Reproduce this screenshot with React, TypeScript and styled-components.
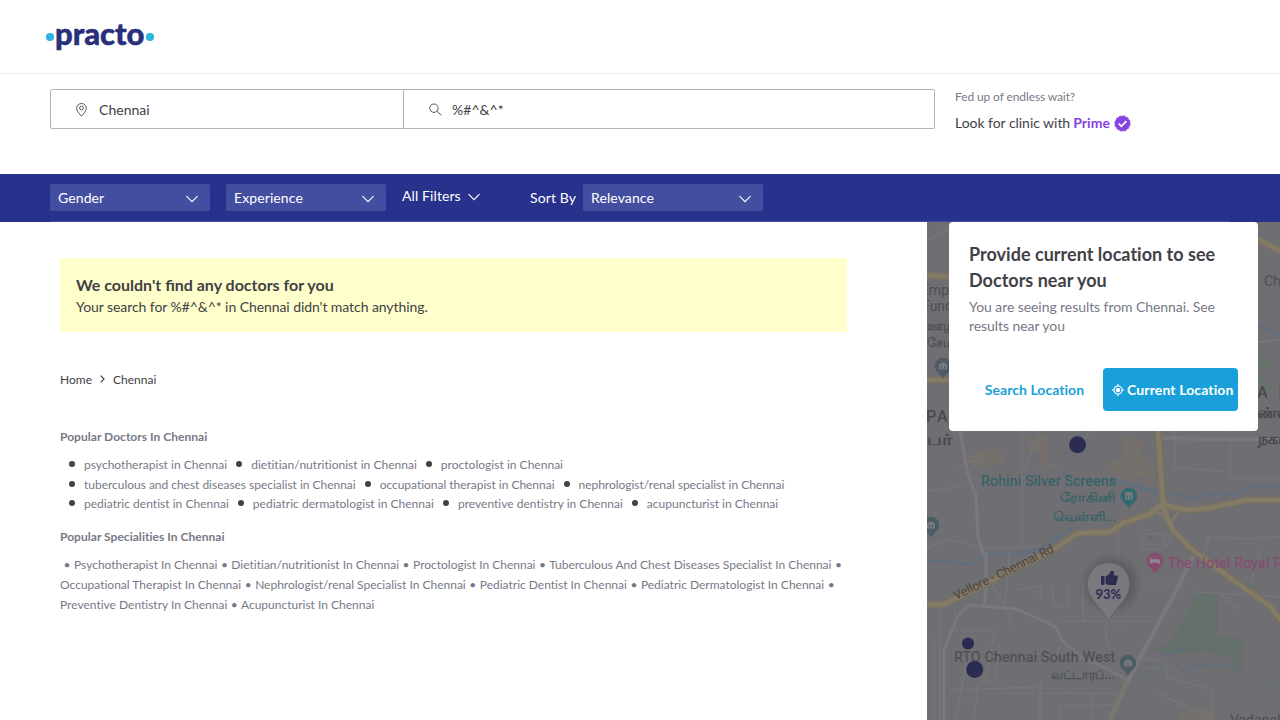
import React, { Fragment } from 'react';
import styled, { createGlobalStyle } from 'styled-components';

const GlobalStyle = createGlobalStyle`
  *, *::before, *::after { box-sizing: border-box; }
  html, body { margin: 0; padding: 0; }
  body {
    font-family: Lato, "Liberation Sans", sans-serif;
    font-size: 14px;
    font-variant-ligatures: none;
    color: #414146;
    background: #fff;
  }
  h1, h2, p, ul { margin: 0; padding: 0; }
`;

const Page = styled.div`
  display: flex;
  flex-direction: column;
  width: 1280px;
  height: 720px;
  overflow: hidden;
`;

const Header = styled.header`
  height: 74px;
  padding: 18px 0 0 44px;
  border-bottom: 1px solid #ededf1;
`;

const SearchRow = styled.section`
  display: flex;
  height: 100px;
  padding: 15px 0 0 50px;
`;

const SearchBox = styled.div`
  display: flex;
  width: 885px;
  height: 40px;
  border: 1px solid #b4b4be;
  border-radius: 2px;
`;

const SearchField = styled.div<{ $width?: number }>`
  display: flex;
  align-items: center;
  gap: 10px;
  padding-left: 24px;
  letter-spacing: 0.03px;
  flex: ${(p) => (p.$width ? `0 0 ${p.$width}px` : '1')};
  & + & { border-left: 1px solid #b4b4be; }
  svg { margin-top: 1px; }
`;

const PrimePromo = styled.div`
  padding-left: 20px;
`;

const PromoHint = styled.p`
  font-size: 12px;
  line-height: 16px;
  letter-spacing: -0.11px;
  color: #787887;
`;

const PromoLink = styled.p`
  display: flex;
  align-items: center;
  gap: 3px;
  margin-top: 9px;
  line-height: 18px;
  letter-spacing: -0.04px;
  b { color: #8642e3; font-weight: 700; letter-spacing: 0.06px; }
  svg { margin-left: 1px; }
`;

const FilterBar = styled.nav`
  height: 48px;
  padding: 0 50px;
  background: #28328c;
`;

const FilterInner = styled.div`
  display: flex;
  height: 48px;
  padding-top: 10px;
  border-bottom: 1px solid #414ba0;
  color: #fff;
  letter-spacing: 0.1px;
`;

const Dropdown = styled.div<{ $width: number }>`
  display: flex;
  align-items: center;
  justify-content: space-between;
  width: ${(p) => p.$width}px;
  height: 27px;
  padding: 0 12px 0 8px;
  margin-right: 16px;
  border-radius: 2px;
  background: #444ea1;
  svg { margin-top: 2px; }
`;

const AllFilters = styled.div`
  display: flex;
  align-items: center;
  gap: 7px;
  height: 23px;
  width: 128px;
  svg { margin-top: 2px; }
`;

const SortLabel = styled.span`
  width: 53px;
  line-height: 27px;
`;

const Body = styled.div`
  display: flex;
  flex: 1;
  min-height: 0;
`;

const Results = styled.main`
  width: 927px;
  padding: 36px 80px 0 60px;
`;

const EmptyNotice = styled.section`
  height: 74px;
  padding: 16px 16px 0;
  background: #ffffcc;
`;

const NoticeTitle = styled.h1`
  font-size: 16px;
  line-height: 22px;
  font-weight: 700;
  font-variant-ligatures: normal;
`;

const NoticeText = styled.p`
  line-height: 22px;
  letter-spacing: -0.07px;
`;

const Breadcrumb = styled.div`
  display: flex;
  align-items: center;
  gap: 8px;
  margin-top: 39px;
  height: 16px;
  font-size: 12px;
`;

const SectionTitle = styled.h2<{ $top: number }>`
  margin-top: ${(p) => p.$top}px;
  font-size: 12px;
  line-height: 16px;
  font-weight: 700;
  letter-spacing: 0.03px;
  color: #787887;
`;

const DoctorList = styled.ul`
  display: flex;
  flex-wrap: wrap;
  margin-top: 10px;
  list-style: none;
  font-size: 12px;
  line-height: 19.6px;
  color: #787887;
`;

const DoctorItem = styled.li<{ $tight: boolean }>`
  display: flex;
  align-items: center;
  letter-spacing: ${(p) => (p.$tight ? -0.025 : 0.02)}px;
  &::before {
    content: '';
    width: 6px;
    height: 6px;
    margin: -1px 9px 0;
    border-radius: 50%;
    background: #414146;
  }
`;

const Specialities = styled.p`
  margin-top: 10px;
  font-size: 12px;
  line-height: 20px;
  color: #787887;
`;

const Bullet = styled.span`
  padding: 0 0.45px;
`;

const MapPanel = styled.aside`
  position: relative;
  width: 353px;
  background: #6f6e73;
  & > svg { display: block; }
`;

const LocationCard = styled.div`
  position: absolute;
  top: 0;
  left: 22px;
  width: 309px;
  height: 209px;
  padding: 19px 20px 0;
  border-radius: 4px;
  background: #fff;
`;

const CardTitle = styled.h2`
  font-size: 18px;
  line-height: 26px;
  font-weight: 700;
  letter-spacing: 0.02px;
`;

const CardText = styled.p`
  margin-top: 4px;
  line-height: 19px;
  letter-spacing: -0.07px;
  color: #787887;
`;

const CardActions = styled.div`
  display: flex;
  justify-content: flex-end;
  margin-top: 33px;
`;

const ActionButton = styled.button<{ $primary?: boolean }>`
  display: flex;
  flex-shrink: 0;
  align-items: center;
  justify-content: ${(p) => (p.$primary ? 'flex-start' : 'center')};
  gap: 3px;
  width: ${(p) => (p.$primary ? 135 : 137)}px;
  height: 43px;
  padding: 0 0 0 ${(p) => (p.$primary ? 9 : 0)}px;
  border: 0;
  border-radius: 4px;
  font: 700 14px Lato, "Liberation Sans", sans-serif;
  font-variant-ligatures: none;
  letter-spacing: ${(p) => (p.$primary ? 0.12 : 0.04)}px;
  white-space: nowrap;
  color: ${(p) => (p.$primary ? '#fff' : '#199fd9')};
  background: ${(p) => (p.$primary ? '#199fd9' : 'transparent')};
`;

const Logo = () => (
  <svg width="114" height="40" viewBox="44 18 114 40">
    <circle cx="50" cy="37" r="4.1" fill="#2ab6e2" />
    <circle cx="150" cy="37" r="4.1" fill="#2ab6e2" />
    <text x="55" y="44.700" fontFamily="Lato, sans-serif" fontSize="29.500" fontWeight="900" fill="#28307c" stroke="#28307c" strokeWidth="0.500" textLength="89.500" lengthAdjust="spacingAndGlyphs">practo</text>
  </svg>
);

const PinIcon = () => (
  <svg width="14" height="16" viewBox="0 0 14 16" fill="none" stroke="#55555c" strokeWidth="1">
    <path d="M6.500 14.200C3.900 11.200 1.700 8.800 1.700 6.300a4.800 4.800 0 0 1 9.600 0C11.300 8.800 9.100 11.200 6.500 14.200Z" />
    <circle cx="6.500" cy="6" r="1.900" />
  </svg>
);

const SearchIcon = () => (
  <svg width="14" height="16" viewBox="0 0 14 16" fill="none" stroke="#55555c" strokeWidth="1">
    <circle cx="5.900" cy="6.200" r="4.200" />
    <path d="M8.900 9.300 13.400 13.300" />
  </svg>
);

const Chevron = () => (
  <svg width="12" height="8" viewBox="0 0 12 8" fill="none" stroke="#fff" strokeWidth="1.100">
    <path d="m.5 1.200 5.500 5.500 5.500-5.500" />
  </svg>
);

const PrimeBadge = () => (
  <svg width="17" height="17" viewBox="0 0 17 17">
    <circle cx="8.500" cy="8.500" r="7.600" fill="#8642e3" stroke="#8642e3" strokeWidth="1" strokeDasharray="2.400 1.600" />
    <path d="m4.700 8.700 2.700 2.600 5-5.200" fill="none" stroke="#fff" strokeWidth="1.800" />
  </svg>
);

const TargetIcon = () => (
  <svg width="12" height="12" viewBox="0 0 12 12" fill="none" stroke="#fff" strokeWidth="1.200">
    <circle cx="6" cy="6" r="4" />
    <circle cx="6" cy="6" r="2.200" fill="#fff" stroke="none" />
    <path d="M6 0v2M6 10v2M0 6h2M10 6h2" />
  </svg>
);

const minorRoads = [
  'M927 240 950 228M927 491 964 486M952 468 971 461 982 463',
  'M927 549 946 540 965 543 983 549 986 575 1006 607',
  'M983 549 1040 546M1005 607 1010 548M1022 430V549M1040 430 1025 470',
  'M1090 431 1075 449M1037 471 1063 463M1118 520 1118 556 1122 584',
  'M1175 431V467L1230 472M1230 431V479H1280M1175 440H1230',
  'M1210 535 1200 567M1206 537 1250 539 1280 536M1142 535V549H1164V533ZM1172 535 1166 548',
  'M940 605V720M955 610V630H995L985 680M1006 607 1013 627',
  'M1053 587V604L1063 608M1067 586 1068 608M1083 582V622M1122 584H1176',
  'M1058 621H1157M1106 621V638L1110 650M1120 621V630',
  'M950 690 1038 687M970 641 956 720M1000 643 995 680 978 684 974 720',
  'M1005 693H1117M1060 705V720M1060 705H1117M1092 693V720M1040 680V720',
  'M1130 657 1165 661 1168 677 1212 690V720M1158 693 1190 709 1213 714',
  'M1195 592 1280 597M1261 549 1250 583M1220 594 1240 610M927 636 934 636V720',
  'M1016 590 1041 586 1040 599M1060 646 1053 662M1146 667 1181 672',
];

const MapArtwork = () => (
  <svg width="353" height="498" viewBox="927 222 353 498" fontFamily="Roboto, sans-serif">
    <defs>
      <radialGradient id="markerShade">
        <stop offset="0.5" stopColor="#48474c" stopOpacity="0.6" />
        <stop offset="1" stopColor="#48474c" stopOpacity="0" />
      </radialGradient>
    </defs>
    <rect x="927" y="222" width="353" height="498" fill="#6f6e73" />
    <path d="M1196 594h22v43l26 2-2 34-9-2v-14l-25-4-36 1-24-5 20-4 14-23Z" fill="#66706a" />
    <path d="m1245 581 12 5v12l-6-10-8-5ZM1258 356h11v15h-11ZM1258 374l11 8v8h-11Z" fill="#66736b" />
    <path d="M1122 435 1145 441 1140 455 1155 465 1153 486 1143 475 1130 480 1108 471 1112 459 1123 462ZM967 455 1000 447 1005 464 970 467ZM1029 435H1048V467H1040V453H1029ZM1180 714 1198 705 1215 714 1216 720H1180Z" fill="#75706b" />
    <g fill="none" stroke="#606f7d" strokeWidth="2.500">
      <path d="M1110 480 1145 489 1161 494M1175 494 1196 498 1218 493 1233 495 1248 486H1280" />
      <path d="M1072 528 1040 549 1020 554 990 555 969 564 927 560" />
      <path d="M1127 677 1146 677 1149 662 1158 668 1180 672 1195 665 1225 664 1245 674M1265 681 1280 684" strokeWidth="1.600" />
      <path d="M1083 431 1067 453 1060 466M1062 471 1068 477M1072 670 1066 690" strokeWidth="1.200" />
      <path d="M1164 655 1184 649M1257 325 1280 334M927 391V402" />
    </g>
    <path d="m1147 534 6 1v4l-6-1Z" fill="#5b6d79" />
    <g fill="none" stroke="#78777c" strokeWidth="1.200">
      {minorRoads.map((d) => <path key={d} d={d} />)}
      <path d="M1280 339 1247 344" strokeWidth="2" />
      <path d="M1160 438 1280 440" strokeWidth="4" />
    </g>
    <g fill="none" stroke="#79787e" strokeLinejoin="round">
      <path d="M960 431 968 475 976 496 978 537 984 556" strokeWidth="3.500" />
      <path d="M944 720V650L958 616 970 605 1017 609 1056 627 1062 640 1082 658 1103 667 1128 680" strokeWidth="3" />
      <path d="M1193 556 1178 587 1128 680 1110 720" strokeWidth="4.500" />
      <path d="M986 552V590L984 607" strokeWidth="3.500" />
    </g>
    <g fill="none" strokeLinejoin="round">
      {[{ c: '#78715f', w: 7 }, { c: '#837b66', w: 4.5 }].map(({ c, w }) => (
        <g key={c} stroke={c} strokeWidth={w}>
          <path d="M927 605 945 604 957 598 1053 550 1078 533 1110 532 1123 523 1150 514 1163 505 1187 510 1210 508 1247 500 1280 500" />
          <path d="M1158 430 1163 505 1167 517 1173 530 1190 548 1237 583 1270 606 1282 622" />
          <path d="M927 275 950 277M927 380 950 380M1258 239 1280 251" />
        </g>
      ))}
      <path d="M1150 510 1163 502 1180 509 1170 524 1162 514Z" stroke="#837b66" strokeWidth="2" />
      <path d="M1127 681 1110 720" stroke="#79766b" strokeWidth="5" />
    </g>
    <g fontSize="14" fill="#4c5054">
      <text x="949" y="295" textAnchor="end">Emp</text>
      <text x="953" y="311" textAnchor="end">Fund</text>
      <text x="927" y="330" fontSize="13" stroke="#4c5054" strokeWidth="0.300">ஊழி</text>
      <text x="927" y="347" fontSize="13" stroke="#4c5054" strokeWidth="0.300">சேம</text>
      <text x="1264" y="286">Chennai</text>
      <text x="954" y="662" textLength="161" stroke="#4c5054" strokeWidth="0.200">RTO Chennai South West</text>
      <text x="1051" y="679" fontSize="13" textLength="64" lengthAdjust="spacingAndGlyphs" stroke="#4c5054" strokeWidth="0.300">வட்டாரப்...</text>
      <text x="1230" y="725" fontSize="14">Vedapalani</text>
    </g>
    <g fontSize="16" fontWeight="500" fill="#48494f">
      <text x="926" y="422" letterSpacing="2">PA</text>
      <text x="927" y="445" textLength="25" lengthAdjust="spacingAndGlyphs" stroke="#48494f" strokeWidth="0.600">பர்</text>
      <text x="1257" y="398" letterSpacing="3.500">A N</text>
      <text x="1257" y="418" stroke="#48494f" strokeWidth="0.600">ண்ண</text>
      <text x="1258" y="444" stroke="#48494f" strokeWidth="0.600">நகர்</text>
    </g>
    <g fill="#316367">
      <text x="981" y="486" fontSize="14" textLength="135" stroke="#316367" strokeWidth="0.200">Rohini Silver Screens</text>
      <g fontSize="13" stroke="#316367" strokeWidth="0.300">
        <text x="1060" y="502" textLength="56" lengthAdjust="spacingAndGlyphs">ரோகினி</text>
        <text x="1053" y="521" textLength="63" lengthAdjust="spacingAndGlyphs">வெள்ளி...</text>
      </g>
    </g>
    <text x="1168" y="568" fontSize="14" fill="#884c70" stroke="#884c70" strokeWidth="0.200" letterSpacing="0.250">The Hotel Royal Pl</text>
    <text transform="translate(956 600) rotate(-26)" fontSize="12.500" fill="#50443f" textLength="110">Vellore - Chennai Rd</text>
    {[
      { x: 1129, y: 496, c: '#316b70' },
      { x: 1155, y: 561, c: '#884c70' },
      { x: 1128, y: 663, c: '#4b5c65' },
      { x: 943, y: 366, c: '#4b5c65' },
      { x: 931, y: 525, c: '#4b5c65' },
    ].map(({ x, y, c }) => (
      <g key={`${x}-${y}`} transform={`translate(${x} ${y})`}>
        <path d="M0 13C-1.500 8-8.300 6-8.300 0a8.300 8.300 0 0 1 16.600 0C8.300 6 1.500 8 0 13Z" fill={c} />
        {c === '#4b5c65' && <path d="M-4-1.500 0-4 4-1.500V3.500h-8Z" fill="#79797e" />}
        {c === '#316b70' && <path d="M-3.800-4h7.600v7.600h-7.600Z" fill="#79797e" />}
        {c === '#884c70' && <path d="M-5-3v6h1.200V1.800h7.600V3H5V-.500L3.800-1.800H-3.800V-3Z" fill="#8f8a90" />}
        {c !== '#884c70' && <path d="M-1.500-.5V2.500M1.500-.5V2.500" stroke={c} strokeWidth="1" />}
      </g>
    ))}
    <g fill="#2b2c52">
      <circle cx="1077.500" cy="444.700" r="8.500" />
      <circle cx="968" cy="643.500" r="6" />
      <circle cx="974.700" cy="669.500" r="8.500" />
    </g>
    <circle cx="1111" cy="584" r="32" fill="url(#markerShade)" />
    <path d="M1108.500 622C1102 607 1087 599 1087 584a21.500 21.500 0 0 1 43 0C1130 599 1115 607 1108.500 622Z" fill="#79787d" stroke="#5d5c61" strokeWidth="0.700" />
    <g fill="#2b2c52">
      <rect x="1101" y="576" width="3.500" height="9" rx="1" />
      <path d="M1105.500 576.500 1109.500 574 1110.500 571H1113.500Q1114.500 573 1113.500 575.500H1117.700V578L1116 585H1108L1105.500 583.500Z" />
      <text x="1108.300" y="598.500" fontSize="13" fontFamily="Lato, sans-serif" fontWeight="700" textAnchor="middle">93%</text>
    </g>
  </svg>
);

const doctors = [
  'psychotherapist', 'dietitian/nutritionist', 'proctologist',
  'tuberculous and chest diseases specialist', 'occupational therapist',
  'nephrologist/renal specialist', 'pediatric dentist', 'pediatric dermatologist',
  'preventive dentistry', 'acupuncturist',
];

const specialities = doctors.map((name) =>
  `${name} in Chennai`.replace(/(^|\s)[a-z]/g, (letter) => letter.toUpperCase()),
);

export default function App() {
  return (
    <Page>
      <GlobalStyle />
      <Header><Logo /></Header>
      <SearchRow>
        <SearchBox>
          <SearchField $width={352}><PinIcon />Chennai</SearchField>
          <SearchField><SearchIcon />%#^&amp;^*</SearchField>
        </SearchBox>
        <PrimePromo>
          <PromoHint>Fed up of endless wait?</PromoHint>
          <PromoLink>Look for clinic with <b>Prime</b> <PrimeBadge /></PromoLink>
        </PrimePromo>
      </SearchRow>
      <FilterBar>
        <FilterInner>
          <Dropdown $width={160}>Gender<Chevron /></Dropdown>
          <Dropdown $width={160}>Experience<Chevron /></Dropdown>
          <AllFilters>All Filters<Chevron /></AllFilters>
          <SortLabel>Sort By</SortLabel>
          <Dropdown $width={180}>Relevance<Chevron /></Dropdown>
        </FilterInner>
      </FilterBar>
      <Body>
        <Results>
          <EmptyNotice>
            <NoticeTitle>We couldn't find any doctors for you</NoticeTitle>
            <NoticeText>Your search for %#^&amp;^* in Chennai didn't match anything.</NoticeText>
          </EmptyNotice>
          <Breadcrumb>
            <span>Home</span>
            <svg width="5" height="8" viewBox="0 0 5 8" fill="none" stroke="#414146" strokeWidth="1.200"><path d="m.7.700 3.300 3.300L.7 7.300" /></svg>
            <span>Chennai</span>
          </Breadcrumb>
          <SectionTitle $top={42}>Popular Doctors In Chennai</SectionTitle>
          <DoctorList>
            {doctors.map((name) => (
              <DoctorItem key={name} $tight={name.length > 18 && / (and|therapist|specialist)/.test(name)}>
                {name} in Chennai
              </DoctorItem>
            ))}
          </DoctorList>
          <SectionTitle $top={15}>Popular Specialities In Chennai</SectionTitle>
          <Specialities>
            {specialities.map((name) => (
              <Fragment key={name}>{'\u00a0'}<Bullet>•</Bullet>{' '}{name}</Fragment>
            ))}
          </Specialities>
        </Results>
        <MapPanel>
          <MapArtwork />
          <LocationCard>
            <CardTitle>Provide current location to see Doctors near you</CardTitle>
            <CardText>You are seeing results from Chennai. See results near you</CardText>
            <CardActions>
              <ActionButton>Search Location</ActionButton>
              <ActionButton $primary><TargetIcon />Current Location</ActionButton>
            </CardActions>
          </LocationCard>
        </MapPanel>
      </Body>
    </Page>
  );
}
